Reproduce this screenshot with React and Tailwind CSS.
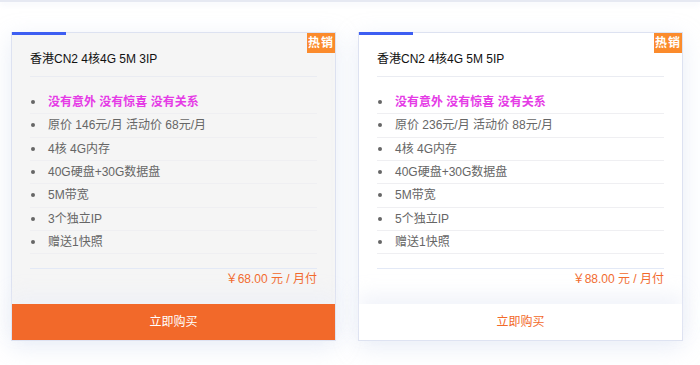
const plans = [
  {
    title: "香港CN2 4核4G 5M 3IP",
    items: ["原价 146元/月 活动价 68元/月", "4核 4G内存", "40G硬盘+30G数据盘", "5M带宽", "3个独立IP", "赠送1快照"],
    price: "￥68.00 元 / 月付",
    active: true,
  },
  {
    title: "香港CN2 4核4G 5M 5IP",
    items: ["原价 236元/月 活动价 88元/月", "4核 4G内存", "40G硬盘+30G数据盘", "5M带宽", "5个独立IP", "赠送1快照"],
    price: "￥88.00 元 / 月付",
    active: false,
  },
];

function Card({ plan }) {
  return (
    <div
      className={`relative flex w-[325px] flex-col border border-[#dde2f1] shadow-[0_6px_22px_rgba(190,202,232,0.35)] ${
        plan.active ? "bg-[#f5f5f5]" : "bg-white"
      }`}
    >
      <div className="absolute left-0 top-[-1px] h-[3px] w-[54px] bg-[#3d5ef2]" />
      <div className="absolute right-0 top-0 flex h-[20px] w-[28px] items-center justify-center bg-[#fb8b2c] text-[12px] font-bold leading-none tracking-[1px] text-white">
        热销
      </div>
      <div className="px-[18px]">
        <div className="border-b border-[#eaecf2] pb-[9px] pt-[18px] text-[12px] leading-[16px] text-[#111]">
          {plan.title}
        </div>
        <ul className="mt-[14px]">
          <li className="flex items-center border-b border-[#efeff2] text-[12px] leading-[22.33px]">
            <span className="ml-[1px] mr-[13px] h-[4px] w-[4px] rounded-full bg-[#666]" />
            <span className="font-bold text-[#e53be6]">没有意外 没有惊喜 没有关系</span>
          </li>
          {plan.items.map((t) => (
            <li key={t} className="flex items-center border-b border-[#efeff2] text-[12px] leading-[22.33px] text-[#666]">
              <span className="ml-[1px] mr-[13px] h-[4px] w-[4px] rounded-full bg-[#666]" />
              <span>{t}</span>
            </li>
          ))}
        </ul>
        <div className="mt-[14px] border-t border-[#e3e9f6] pb-[17px] pt-[2px] text-right text-[12px] leading-[16px] text-[#f2692b]">
          {plan.price}
        </div>
      </div>
      <div
        className={`flex h-[36px] items-center justify-center text-[12px] shadow-[0_-10px_18px_rgba(236,240,248,0.7)] ${
          plan.active ? "bg-[#f2692a] text-white" : "bg-white text-[#f2692a]"
        }`}
      >
        立即购买
      </div>
    </div>
  );
}

export default function App() {
  return (
    <div
      className="h-[365px] w-[700px] bg-white"
      style={{ fontFamily: '"Liberation Sans", "Noto Sans CJK SC", sans-serif' }}
    >
      <div className="h-[2px] w-full bg-[#e6e9f2] shadow-[0_2px_6px_rgba(220,226,240,0.6)]" />
      <div className="flex gap-[22px] pl-[11px] pt-[30px]">
        {plans.map((p) => (
          <Card key={p.title} plan={p} />
        ))}
      </div>
    </div>
  );
}
